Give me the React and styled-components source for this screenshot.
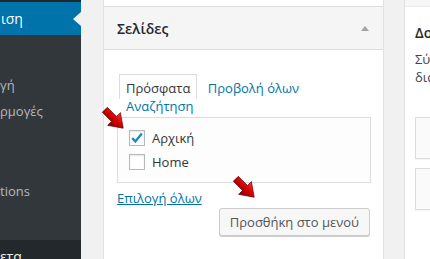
import React from 'react';
import styled, {createGlobalStyle, css} from 'styled-components';

const GlobalStyle = createGlobalStyle`
  html, body {
    margin: 0;
    padding: 0;
    overflow: hidden;
    background: #f1f1f1;
    font-family: "Open Sans", "Liberation Sans", sans-serif;
    font-size: 13px;
    color: #444;
  }
  * { box-sizing: border-box; }
`;

const Page = styled.div`
  position: relative;
  display: flex;
  width: 430px;
  height: 259px;
  overflow: hidden;
`;

const Sidebar = styled.div`
  width: 81px;
  flex: none;
  display: flex;
  flex-direction: column;
  background: #32373c;
  border-top: 2px solid #23282d;
  overflow: hidden;
  white-space: nowrap;
`;

const CurrentItem = styled.div`
  position: relative;
  height: 33px;
  display: flex;
  align-items: center;
  padding-left: 1px;
  background: #0073aa;
  color: #fff;
  font-size: 14px;

  &::after {
    content: "";
    position: absolute;
    right: 0;
    top: 10px;
    border-top: 7px solid transparent;
    border-bottom: 7px solid transparent;
    border-right: 8px solid #f1f1f1;
  }
`;

const SubMenu = styled.div`
  padding-top: 36.75px;
`;

const SubItem = styled.div`
  height: 26.5px;
  line-height: 26.5px;
  color: #b4b9be;
  font-size: 13px;
`;

const BottomItem = styled.div`
  margin-top: auto;
  height: 19px;
  padding-top: 8px;
  line-height: 18px;
  background: #23282d;
  color: #eee;
  font-size: 14px;
`;

const Main = styled.div`
  flex: 1;
  display: flex;
  gap: 20px;
  padding-left: 22px;
  min-width: 0;
`;

const Panel = styled.div`
  width: 281px;
  flex: none;
  background: #fff;
  border-left: 1px solid #e2e2e2;
  border-right: 1px solid #e2e2e2;
`;

const PrevSection = styled.div`
  height: 7px;
  border-bottom: 1px solid #dedede;
`;

const Header = styled.div`
  height: 43px;
  display: flex;
  align-items: center;
  justify-content: space-between;
  padding: 0 14px 0 13px;
  background: #f5f5f5;
  border-bottom: 1px solid #dedede;
`;

const Title = styled.h3`
  margin: 0;
  font-size: 14px;
  font-weight: 600;
  color: #23282d;
`;

const Toggle = styled.span`
  width: 0;
  height: 0;
  border-left: 4px solid transparent;
  border-right: 4px solid transparent;
  border-bottom: 5px solid #a0a5aa;
`;

const PanelBody = styled.div`
  padding: 0 12px 0 13px;
`;

const Tabs = styled.div`
  width: 240px;
  margin-top: 29px;
  padding-left: 2px;
  line-height: 18px;
`;

const Tab = styled.span`
  padding: 4px 6px 2px;
  border: 1px solid transparent;
  border-bottom: none;
  color: #0073aa;

  ${({active}) => active && css`
    color: #32373c;
    background: #fff;
    border-color: #dcdcdc;
  `}
`;

const ItemList = styled.div`
  margin-top: 2px;
  padding: 8px 11px;
  background: #fdfdfd;
  border: 1px solid #dcdcdc;
`;

const Row = styled.label`
  height: 24px;
  display: flex;
  align-items: center;
  gap: 7px;
  color: #32373c;
`;

const Box = styled.span`
  width: 16px;
  height: 16px;
  display: flex;
  align-items: center;
  justify-content: center;
  background: #fff;
  border: 1px solid #b4b9be;
  box-shadow: inset 0 1px 2px rgba(0,0,0,.1);
`;

const LinkRow = styled.div`
  margin-top: 6px;
  line-height: 18px;
`;

const Link = styled.a`
  color: #0073aa;
  text-decoration: underline;
`;

const ButtonRow = styled.div`
  display: flex;
  justify-content: flex-end;
  margin-top: 1px;
  padding-right: 1px;
`;

const Button = styled.button`
  height: 28px;
  padding: 0 10px;
  font-family: inherit;
  font-size: 13px;
  line-height: 26px;
  color: #555;
  background: #f7f7f7;
  border: 1px solid #ccc;
  border-radius: 3px;
  box-shadow: 0 1px 0 #ccc;
`;

const Structure = styled.div`
  flex: none;
  width: 360px;
  background: #fff;
  border-left: 1px solid #e2e2e2;
`;

const StructTop = styled.div`
  height: 7px;
  background: #f7f7f7;
  border-bottom: 1px solid #ececec;
`;

const StructBody = styled.div`
  padding-left: 10px;
  white-space: nowrap;
`;

const StructTitle = styled.h3`
  margin: 17px 0 0;
  font-size: 14px;
  font-weight: 600;
  line-height: 18px;
  color: #23282d;
`;

const Desc = styled.p`
  margin: 8px 0 0;
  line-height: 18px;
  color: #444;
`;

const MenuItems = styled.div`
  margin-top: 31px;
  display: flex;
  flex-direction: column;
  gap: 9px;
`;

const MenuItem = styled.div`
  height: 42px;
  background: #fafafa;
  border: 1px solid #dcdcdc;
  box-shadow: 0 1px 1px rgba(0,0,0,.04);
`;

const Arrow = styled.svg`
  position: absolute;
  left: ${({x}) => x}px;
  top: ${({y}) => y}px;
  width: 32px;
  height: 32px;
`;

const RedArrow = ({x, y, id}) => (
  <Arrow x={x} y={y} viewBox="0 0 32 32">
    <defs>
      <linearGradient id={id} x1="0" y1="0" x2="0" y2="1">
        <stop offset="0" stopColor="#ff3a2e"/>
        <stop offset="0.45" stopColor="#d60000"/>
        <stop offset="1" stopColor="#780000"/>
      </linearGradient>
    </defs>
    <g transform="rotate(45 16 16)">
      <polygon
        points="3,12.5 16,12.5 16,7 29,16 16,25 16,19.5 3,19.5"
        fill={`url(#${id})`}
        stroke="#650000"
        strokeWidth="0.7"
        strokeLinejoin="round"
      />
    </g>
  </Arrow>
);

const Check = () => (
  <svg width="14" height="14" viewBox="0 0 14 14">
    <path d="M2.2 7.2 L5.4 10.4 L11.8 2.6" fill="none" stroke="#1e8cbe" strokeWidth="2.4"/>
  </svg>
);

const App = () => (
  <Page>
    <GlobalStyle/>
    <Sidebar>
      <CurrentItem>ιση</CurrentItem>
      <SubMenu>
        <SubItem>γή</SubItem>
        <SubItem>ρμογές</SubItem>
        <SubItem/>
        <SubItem/>
        <SubItem>tions</SubItem>
      </SubMenu>
      <BottomItem>ετα</BottomItem>
    </Sidebar>
    <Main>
      <Panel>
        <PrevSection/>
        <Header>
          <Title>Σελίδες</Title>
          <Toggle/>
        </Header>
        <PanelBody>
          <Tabs>
            <Tab active>Πρόσφατα</Tab> <Tab>Προβολή όλων</Tab> <Tab>Αναζήτηση</Tab>
          </Tabs>
          <ItemList>
            <Row><Box><Check/></Box>Αρχική</Row>
            <Row><Box/>Home</Row>
          </ItemList>
          <LinkRow><Link>Επιλογή όλων</Link></LinkRow>
          <ButtonRow><Button>Προσθήκη στο μενού</Button></ButtonRow>
        </PanelBody>
      </Panel>
      <Structure>
        <StructTop/>
        <StructBody>
          <StructTitle>Δομή μενού</StructTitle>
          <Desc>Σύρετε κάθε στοιχείο στη σειρά που προτιμάτε.<br/>διαμόρφωσης του στοιχείου.</Desc>
          <MenuItems>
            <MenuItem/>
            <MenuItem/>
          </MenuItems>
        </StructBody>
      </Structure>
    </Main>
    <RedArrow id="a1" x={98} y={103}/>
    <RedArrow id="a2" x={229} y={172}/>
  </Page>
);

export default App;
